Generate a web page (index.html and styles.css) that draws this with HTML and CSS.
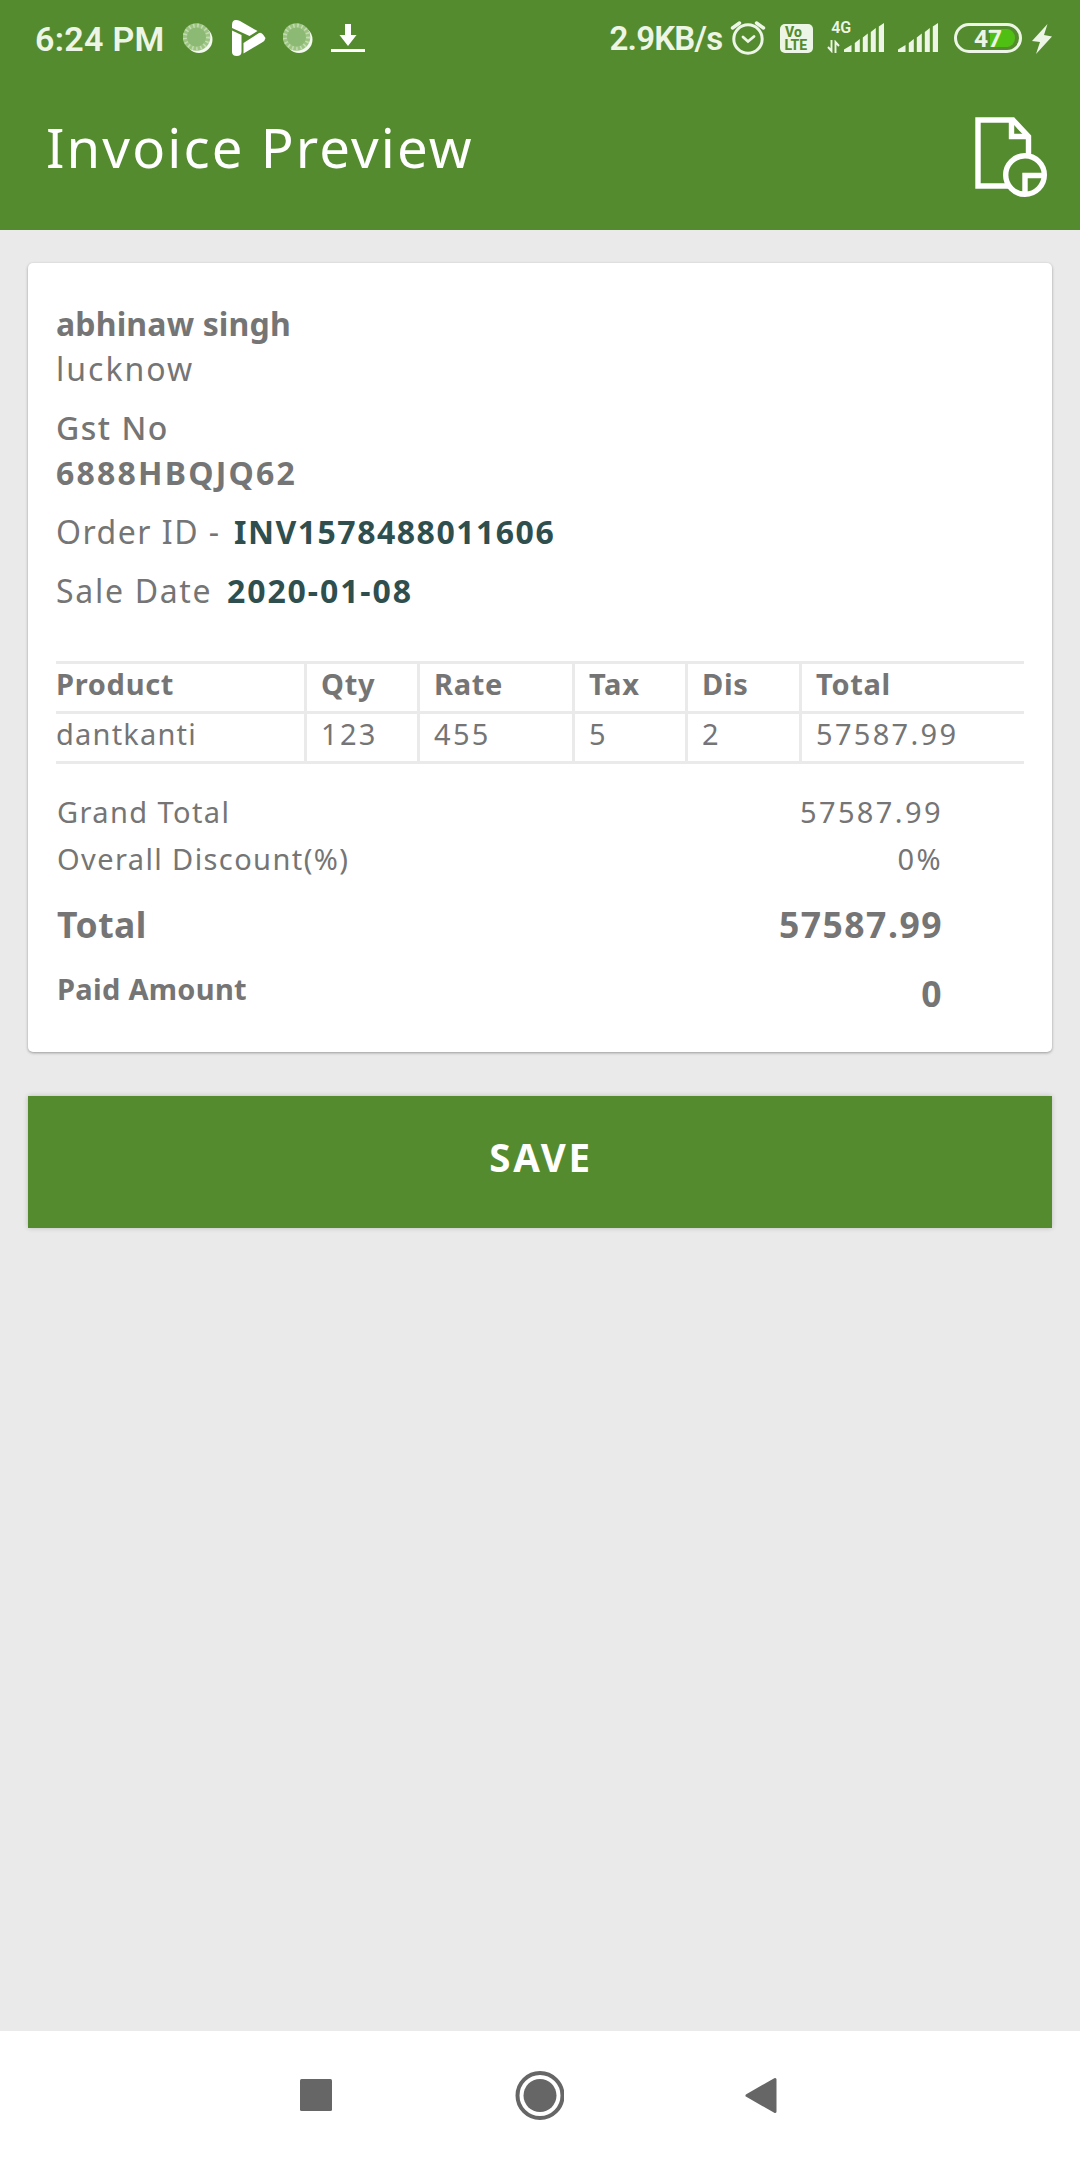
FILE: index.html
```html
<!DOCTYPE html>
<html lang="en">
<head>
  <meta charset="UTF-8" />
  <meta name="viewport" content="width=device-width, initial-scale=1.0"/>
  <title>Invoice Preview</title>
  <link rel="stylesheet" href="styles.css">
</head>
<body>

<header class="header">
  <div class="status-bar">
    <span class="time">6:24 PM</span>
    <svg class="dot" width="32" height="32" viewBox="0 0 32 32">
      <circle cx="16" cy="16.500" r="13.5" fill="#f4f9f0"/>
      <circle cx="13.500" cy="14" r="13.800" fill="#9cc480"/>
      <circle cx="13.500" cy="14" r="11.500" fill="none" stroke="#c3dcb2" stroke-width="4" stroke-dasharray="1.5 2.7"/>
      <circle cx="13.500" cy="14" r="9.500" fill="#8cb973"/>
    </svg>
    <svg class="play" width="34" height="37" viewBox="0 0 34 37" fill="#fff">
      <path d="M0 5 Q0 0 4 0 Q6 0 8 1 L25.500 11 L17.500 16 L0 8 Z"/>
      <path d="M0 10.500 L9.500 15 V32 Q9.500 36 4.800 36 Q0 36 0 32 Z"/>
      <path d="M11.500 23 L27 13 Q29 12 31 14.500 L33.500 18 Q33 21 30 22.500 L11.500 33.500 Z"/>
    </svg>
    <svg class="dot" width="32" height="32" viewBox="0 0 32 32">
      <circle cx="16" cy="16.500" r="13.5" fill="#f4f9f0"/>
      <circle cx="13.500" cy="14" r="13.800" fill="#9cc480"/>
      <circle cx="13.500" cy="14" r="11.500" fill="none" stroke="#c3dcb2" stroke-width="4" stroke-dasharray="1.5 2.7"/>
      <circle cx="13.500" cy="14" r="9.500" fill="#8cb973"/>
    </svg>
    <svg class="download" width="34" height="30" viewBox="0 0 34 30">
      <path d="M14 0 H20 V11 H25.500 L17 22 L8.500 11 H14 Z M0 25 H34 V28 H0 Z" fill="#fff"/>
    </svg>

    <span class="speed">2.9KB/s</span>
    <svg class="alarm" width="36" height="36" viewBox="0 0 36 36" fill="none" stroke="#edf6e6" stroke-linecap="round">
      <circle cx="18" cy="19" r="14.2" stroke-width="3"/>
      <path d="M13 17 L18 21.500 L24 16.500" stroke-width="2.8"/>
      <path d="M2.500 8 L9.500 3 M33.500 8 L26.500 3" stroke-width="3.400"/>
    </svg>
    <svg class="volte" width="34" height="30" viewBox="0 0 34 30">
      <rect width="33" height="29" rx="5" fill="#edf6e6"/>
      <text x="5" y="12.500">Vo</text>
      <text x="4.500" y="26">LTE</text>
    </svg>
    <span class="network">
      <span class="network-type">4G</span>
      <svg width="14" height="13" viewBox="0 0 14 13" fill="none" stroke="#edf6e6" stroke-width="1.900">
        <path d="M4.500 0 V11 L1 7 M8.500 13 V2 L12 6"/>
      </svg>
    </span>
    <svg class="signal" width="40" height="30" viewBox="0 0 40 30" fill="#edf6e6">
      <path d="M0 29 V26.500 L7.500 22 V29 Z M10.800 29 V20 L15.800 16 V29 Z M18.800 29 V14.500 L23.800 10.500 V29 Z M26.800 29 V9 L31.800 5 V29 Z M34.800 29 V3.500 L40 0 V29 Z"/>
    </svg>
    <svg class="signal second" width="40" height="30" viewBox="0 0 40 30" fill="#edf6e6">
      <path d="M0 29 V26.500 L7.500 22 V29 Z M10.800 29 V20 L15.800 16 V29 Z M18.800 29 V14.500 L23.800 10.500 V29 Z M26.800 29 V9 L31.800 5 V29 Z M34.800 29 V3.500 L40 0 V29 Z"/>
    </svg>
    <span class="battery">47</span>
    <svg class="bolt" width="20" height="30" viewBox="0 0 20 30">
      <path d="M15.500 0 L0 17 L8 18 L4 30 L20 12.500 L12 11 Z" fill="#edf6e6"/>
    </svg>
  </div>

  <div class="toolbar">
    <h1>Invoice Preview</h1>
    <svg class="report" width="74" height="82" viewBox="0 0 74 82" fill="none" stroke="#fff" stroke-width="5.400">
      <path d="M34 69 H3 V3 H38 L53.500 19.500 V38"/>
      <path d="M36.500 3 V19.500 H53"/>
      <circle cx="50" cy="58" r="19.300"/>
      <path d="M50 78 V58.500 H70"/>
    </svg>
  </div>
</header>

<main class="content">
  <section class="card">
    <div class="customer">
      <div class="name">abhinaw singh</div>
      <div class="city">lucknow</div>
      <div class="gst-label">Gst No</div>
      <div class="gst">6888HBQJQ62</div>
      <div class="line"><span class="order-label">Order ID -</span><span class="order">INV1578488011606</span></div>
      <div class="line"><span class="date-label">Sale Date</span><span class="date">2020-01-08</span></div>
    </div>

    <table class="items">
      <colgroup>
        <col class="col-product"><col class="col-small"><col class="col-rate"><col class="col-small"><col class="col-dis"><col>
      </colgroup>
      <thead>
        <tr><th>Product</th><th>Qty</th><th>Rate</th><th>Tax</th><th>Dis</th><th>Total</th></tr>
      </thead>
      <tbody>
        <tr><td class="product">dantkanti</td><td>123</td><td>455</td><td>5</td><td>2</td><td>57587.99</td></tr>
      </tbody>
    </table>

    <div class="totals">
      <div class="row"><span class="label">Grand Total</span><span class="value">57587.99</span></div>
      <div class="row"><span class="label">Overall Discount(%)</span><span class="value">0%</span></div>
      <div class="row total"><span>Total</span><span class="amount">57587.99</span></div>
      <div class="row paid"><span class="paid-label">Paid Amount</span><span class="amount">0</span></div>
    </div>
  </section>

  <button class="save" type="button">SAVE</button>
</main>

<nav class="nav-bar">
  <svg width="34" height="50" viewBox="0 0 34 50"><rect x="1" y="9" width="32" height="32" rx="1.500" fill="#666"/></svg>
  <svg width="50" height="50" viewBox="0 0 50 50">
    <circle cx="26" cy="25.500" r="22.500" fill="none" stroke="#666" stroke-width="4"/>
    <circle cx="26" cy="25.500" r="16.500" fill="#666"/>
  </svg>
  <svg width="34" height="50" viewBox="0 0 34 50">
    <path d="M2 25.500 L30 9.500 V41.500 Z" fill="#666" stroke="#666" stroke-width="3" stroke-linejoin="round"/>
  </svg>
</nav>

</body>
</html>
```
FILE: styles.css
```css
* {
  box-sizing: border-box;
}
body {
  font-family: "Noto Sans", "Open Sans", sans-serif;
  background: #eaeaea;
  color: #757575;
  margin: 0;
  height: 2160px;
  display: flex;
  flex-direction: column;
}
svg {
  display: block;
  flex: none;
}

/* header */
.header {
  background: #558b2f;
  color: #fff;
  height: 230px;
}
.status-bar {
  display: flex;
  align-items: flex-start;
  height: 80px;
  padding: 0 28px 0 35px;
  font-family: "Roboto", sans-serif;
  font-weight: 600;
  color: #edf6e6;
  white-space: nowrap;
}
.time {
  width: 148px;
  font-size: 34px;
  line-height: 40px;
  margin-top: 19px;
  letter-spacing: 0.3px;
}
.dot {
  margin-top: 23px;
}
.play {
  margin: 20px 17px 0 17px;
}
.download {
  margin: 24px 0 0 16px;
}
.speed {
  width: 115px;
  margin: 19px 0 0 245px;
  font-size: 33px;
  line-height: 40px;
  letter-spacing: -0.8px;
}
.alarm {
  margin: 20px 0 0 6px;
}
.volte {
  margin: 24px 0 0 14px;
}
.volte text {
  fill: #558b2f;
  font-size: 14px;
  font-weight: 800;
}
.network {
  width: 24px;
  margin: 20px 0 0 13px;
}
.network-type {
  display: block;
  margin-left: 4px;
  font-size: 16px;
  line-height: 15px;
}
.network svg {
  margin-top: 5px;
}
.signal {
  margin: 23px 0 0 -7px;
}
.signal.second {
  margin-left: 14px;
}
.battery {
  width: 68px;
  height: 30px;
  margin: 23px 10px 0 16px;
  border: 3px solid #edf6e6;
  border-radius: 15px;
  background: linear-gradient(90deg, transparent 29px, #50bf14 29px) content-box;
  padding: 3px 4px;
  font-size: 24.5px;
  font-weight: 700;
  line-height: 19px;
  text-align: center;
}
.bolt {
  margin-top: 24px;
}
.toolbar {
  display: flex;
  justify-content: space-between;
  padding: 27px 31px 0 46px;
}
h1 {
  margin: 0;
  font-size: 54.5px;
  font-weight: 400;
  line-height: 80px;
  letter-spacing: 2.1px;
}
.report {
  margin-top: 10px;
}

/* invoice card */
.content {
  flex: 1;
  padding: 33px 28px 0;
}
.card {
  height: 789px;
  padding: 38px 28px 0;
  background: #fff;
  border-radius: 5px;
  box-shadow: 0 1px 3px rgba(0, 0, 0, 0.35);
}
.customer {
  font-size: 32px;
  line-height: 45px;
}
.name {
  font-weight: 700;
  letter-spacing: 0.15px;
}
.city {
  letter-spacing: 2px;
}
.gst-label {
  margin-top: 14px;
  font-weight: 500;
  letter-spacing: 1.5px;
}
.gst {
  font-weight: 700;
  letter-spacing: 2.2px;
}
.line {
  display: flex;
  margin-top: 14px;
}
.order-label {
  width: 178px;
  letter-spacing: 1.5px;
}
.date-label {
  width: 171px;
  letter-spacing: 1.7px;
}
.order, .date {
  color: #2f4f4f;
  font-weight: 700;
  letter-spacing: 1.5px;
}
.date {
  letter-spacing: 1.9px;
}

/* product table */
.items {
  width: 968px;
  margin-top: 48px;
  table-layout: fixed;
  border-collapse: separate;
  border-spacing: 0;
  border-top: 3px solid #eaeaea;
  font-size: 29px;
  line-height: 40px;
}
.items th, .items td {
  padding: 0 0 7px 14px;
  border-left: 3px solid #eaeaea;
  border-bottom: 3px solid #eaeaea;
  text-align: left;
  letter-spacing: 2.3px;
}
.items th {
  font-weight: 700;
  letter-spacing: 0.7px;
}
.items th:first-child, .items td:first-child {
  padding-left: 0;
  border-left: none;
}
.items .product {
  letter-spacing: 1.2px;
}
.col-product {
  width: 248px;
}
.col-small {
  width: 113px;
}
.col-rate {
  width: 155px;
}
.col-dis {
  width: 114px;
}

.totals {
  margin-top: 24px;
  padding: 0 81px 0 1px;
  font-size: 29px;
  line-height: 47px;
}
.row {
  display: flex;
  justify-content: space-between;
}
.label {
  letter-spacing: 1.4px;
}
.value {
  letter-spacing: 2.4px;
}
.total {
  margin-top: 18px;
  font-size: 35.5px;
  font-weight: 700;
  line-height: 48px;
  letter-spacing: 0.5px;
}
.amount {
  font-size: 35.5px;
  letter-spacing: 1.5px;
}
.paid {
  margin-top: 17px;
  font-weight: 700;
  line-height: 48px;
}
.paid-label {
  letter-spacing: 0.3px;
}
.paid .amount {
  padding-top: 4px;
}

.save {
  display: block;
  width: 100%;
  height: 132px;
  margin-top: 44px;
  padding: 0 0 10px 2px;
  background: #558b2f;
  color: #fff;
  border: none;
  box-shadow: 0 0 5px rgba(0, 0, 0, 0.2);
  font-family: inherit;
  font-size: 38.5px;
  font-weight: 700;
  letter-spacing: 2.6px;
  cursor: pointer;
}

/* system navigation */
.nav-bar {
  display: flex;
  justify-content: space-between;
  height: 129px;
  padding: 39px 301px 0 299px;
  background: #fff;
}
```
